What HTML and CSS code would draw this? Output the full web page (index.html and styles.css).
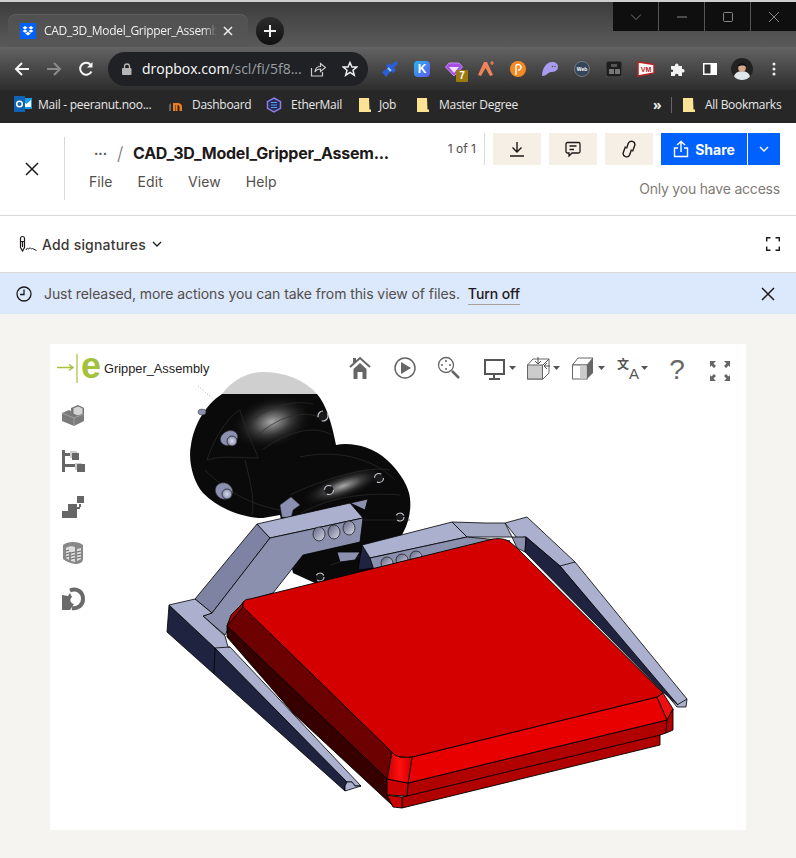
FILE: index.html
```html
<!DOCTYPE html>
<html lang="en">
<head>
<meta charset="utf-8">
<title>CAD_3D_Model_Gripper_Assembly</title>
<link rel="stylesheet" href="styles.css">
</head>
<body>
<div class="browser">
  <div class="tabstrip">
    <div class="tab">
      <svg class="favicon" viewBox="0 0 16 16" width="16" height="16"><rect width="16" height="16" fill="#0061fe"/><path d="M5 3 2.500 4.700 5 6.400 7.600 4.700ZM11 3 8.400 4.700 11 6.400 13.500 4.700ZM5 6.400 2.500 8.100 5 9.800 7.600 8.100ZM11 6.400 8.400 8.100 11 9.800 13.500 8.100ZM5.200 10.600 8 8.800 10.800 10.600 8 12.600Z" fill="#fff"/></svg>
      <span class="tab-title">CAD_3D_Model_Gripper_Assembly</span>
      <svg class="tab-x" viewBox="0 0 10 10" width="10" height="10"><path d="M1 1 9 9M9 1 1 9" stroke="#eee" stroke-width="1.500"/></svg>
    </div>
    <div class="newtab"><svg viewBox="0 0 12 12" width="12" height="12"><path d="M6 0V12M0 6H12" stroke="#eee" stroke-width="2"/></svg></div>
    <div class="wincontrols">
      <div class="winbtn"><svg viewBox="0 0 12 12" width="12" height="12"><path d="M1 3.500 6 8.500 11 3.500" fill="none" stroke="#777" stroke-width="1"/></svg></div>
      <div class="winbtn"><svg viewBox="0 0 12 12" width="12" height="12"><path d="M1 6H11" stroke="#888" stroke-width="1"/></svg></div>
      <div class="winbtn"><svg viewBox="0 0 12 12" width="12" height="12"><rect x="1.500" y="1.500" width="9" height="9" rx="1" fill="none" stroke="#888"/></svg></div>
      <div class="winbtn"><svg viewBox="0 0 12 12" width="12" height="12"><path d="M1 1 11 11M11 1 1 11" stroke="#888" stroke-width="1"/></svg></div>
    </div>
  </div>
  <div class="toolbar">
    <div class="navbtn"><svg viewBox="0 0 16 16" width="16" height="16"><path d="M15 8H2M8 2 2 8 8 14" fill="none" stroke="#f4f4f4" stroke-width="2"/></svg></div>
    <div class="navbtn"><svg viewBox="0 0 16 16" width="16" height="16"><path d="M1 8H14M8 2 14 8 8 14" fill="none" stroke="#8a8a8a" stroke-width="2"/></svg></div>
    <div class="navbtn"><svg viewBox="0 0 16 16" width="16" height="16"><path d="M13.500 10.500A6 6 0 1 1 12.700 3.800" fill="none" stroke="#f4f4f4" stroke-width="2"/><path d="M14.500 1V6.500H9Z" fill="#f4f4f4"/></svg></div>
    <div class="omnibox">
      <svg class="lock" viewBox="0 0 10 12" width="10" height="12"><path d="M2.500 5V3.500a2.500 2.500 0 0 1 5 0V5" fill="none" stroke="#b5b5b5" stroke-width="1.300"/><rect y="5" width="9.500" height="7" rx="1" fill="#b5b5b5"/></svg>
      <span class="url"><b>dropbox.com</b>/scl/fi/5f8...</span>
      <svg class="omni-share" viewBox="0 0 16 16" width="16" height="16"><path d="M1.500 7V15H12.500V11" fill="none" stroke="#ccc" stroke-width="1.200"/><path d="M5 11C5 7 8 5.500 10.500 5.500V2.500L15.500 6.500 10.500 10.500V8C8 8 6 9 5 11Z" fill="none" stroke="#ccc" stroke-width="1.200"/></svg>
      <svg class="omni-star" viewBox="0 0 16 16" width="16" height="16"><path d="M8 1.500 10 6H14.800L11 9.200 12.300 14.200 8 11.400 3.700 14.200 5 9.200 1.200 6H6Z" fill="none" stroke="#eee" stroke-width="1.500"/></svg>
    </div>
    <div class="extensions">
      <div class="ext"><svg viewBox="0 0 18 18" width="18" height="18"><path d="M1 12 7 8 5 6 8 3 10 5 15 1 17 3 13 8 15 10 12 13 10 11 5 17Z" fill="#2b5fd9"/><path d="M7 8 10 11" stroke="#9cf" stroke-width="2"/></svg></div>
      <div class="ext"><div class="kbadge">K</div></div>
      <div class="ext"><svg viewBox="0 0 18 16" width="18" height="16"><path d="M4 2H14L17.500 6 9 15 .5 6Z" fill="#a54fe0" stroke="#c98af0"/><path d="M4 6H14L9 12Z" fill="#f0e0ff"/></svg><span class="count">7</span></div>
      <div class="ext"><svg viewBox="0 0 18 18" width="18" height="18"><path d="M7 2 10 2 16 15 13 16 8.500 8 4 16 1 15Z" fill="#f0835a"/><path d="M15 1V5M13 3H17" stroke="#f0835a" stroke-width="1.200"/></svg></div>
      <div class="ext"><svg viewBox="0 0 18 18" width="18" height="18"><circle cx="9" cy="9" r="8" fill="#f6891f"/><path d="M7 15V5.500a2.800 2.800 0 1 1 2 4.500" fill="none" stroke="#fff" stroke-width="1.500"/></svg></div>
      <div class="ext"><svg viewBox="0 0 18 16" width="18" height="16"><path d="M1 15C1 8 5 1 11 1 15 1 17 3 17 6 17 10 13 11 10 11 7 11 6 15 1 15Z" fill="#a99bef"/><circle cx="11.500" cy="5.500" r=".8" fill="#554"/><circle cx="14" cy="5.500" r=".8" fill="#554"/></svg></div>
      <div class="ext"><div class="webbadge">Web</div></div>
      <div class="ext"><svg viewBox="0 0 16 16" width="16" height="16"><rect width="16" height="16" rx="2" fill="#1d1d1d" stroke="#555"/><rect x="5" y="3" width="6" height="3" fill="#555"/><rect x="3" y="8" width="5" height="5" fill="#777"/><rect x="9" y="8" width="5" height="5" fill="#777"/></svg></div>
      <div class="ext"><svg viewBox="0 0 18 16" width="18" height="16"><path d="M1 1 17 3.500V12L1 15Z" fill="#fff" stroke="#b22" stroke-width="1.500"/><text x="9" y="10.500" class="vm">VM</text></svg></div>
      <div class="ext"><svg viewBox="0 0 16 16" width="16" height="16"><path d="M1 5H5C4.500 1.500 9 1.500 8.500 5H12V8C15.500 7.500 15.500 12 12 11.500V15H8.500C9 12 4.500 12 5 15H1V11C4 11.500 4 8 1 8.500Z" fill="#f2f2f2"/></svg></div>
      <div class="ext"><svg viewBox="0 0 14 12" width="14" height="12"><rect width="14" height="12" fill="#fff"/><rect x="1.500" y="1.500" width="6" height="9" fill="#333"/></svg></div>
      <div class="ext"><div class="avatar"><svg viewBox="0 0 22 22" width="22" height="22"><rect width="22" height="22" fill="#222"/><ellipse cx="11" cy="19" rx="8" ry="6" fill="#dfe7ea"/><circle cx="11" cy="10" r="3.800" fill="#d8a88c"/><path d="M6 9C7 4 15 4 16 9 14 7 9 7 6 9Z" fill="#111"/></svg></div></div>
      <div class="ext"><svg viewBox="0 0 4 14" width="4" height="14"><circle cx="2" cy="2" r="1.500" fill="#eee"/><circle cx="2" cy="7" r="1.500" fill="#eee"/><circle cx="2" cy="12" r="1.500" fill="#eee"/></svg></div>
    </div>
  </div>
  <div class="bookmarks">
    <a class="bm bm-mail"><svg viewBox="0 0 18 16" width="18" height="16"><rect x="7" y="2" width="11" height="11" fill="#1f9ae0"/><path d="M8 4 12.500 8 17 4V11H8Z" fill="#fff"/><rect y="0" width="11" height="16" fill="#0f63b5"/><circle cx="5.500" cy="8" r="2.800" fill="none" stroke="#fff" stroke-width="1.500"/></svg><span>Mail - peeranut.noo...</span></a>
    <a class="bm bm-dash"><svg viewBox="0 0 16 12" width="16" height="12"><path d="M1 12V6L3 4V12Z" fill="#666"/><path d="M5 12V4H9C12 4 14 5 14 8V12H11.500V8C11.500 6.500 10 6 9.500 6V12H7.500V6H7V12Z" fill="#f07c1e"/></svg><span>Dashboard</span></a>
    <a class="bm bm-ether"><svg viewBox="0 0 16 16" width="16" height="16"><path d="M8 1 14.500 4.700V11.300L8 15 1.500 11.300V4.700Z" fill="#2a2a55" stroke="#8d7de8" stroke-width="1.500"/><path d="M5 5.500H11M5 8H11M5 10.500H11" stroke="#4aa3ff" stroke-width="1.200"/></svg><span>EtherMail</span></a>
    <a class="bm bm-job"><svg class="folder" viewBox="0 0 12 14" width="12" height="14"><path d="M0 0H10L10.500 11.500H12V14H0Z" fill="#fde293"/></svg><span>Job</span></a>
    <a class="bm bm-master"><svg class="folder" viewBox="0 0 12 14" width="12" height="14"><path d="M0 0H10L10.500 11.500H12V14H0Z" fill="#fde293"/></svg><span>Master Degree</span></a>
    <span class="chev">»</span>
    <span class="bm-rule"></span>
    <a class="bm bm-all"><svg class="folder" viewBox="0 0 12 14" width="12" height="14"><path d="M0 0H10L10.500 11.500H12V14H0Z" fill="#fde293"/></svg><span>All Bookmarks</span></a>
  </div>
</div>

<div class="page">
  <header class="header">
    <div class="close-col"><svg viewBox="0 0 14 14" width="14" height="14"><path d="M1 1 13 13M13 1 1 13" stroke="#1e1919" stroke-width="1.500"/></svg></div>
    <div class="title-col">
      <div class="crumb"><span class="dots">···</span><span class="slash">/</span><h1 class="filename">CAD_3D_Model_Gripper_Assem...</h1></div>
      <nav class="menu"><span>File</span><span>Edit</span><span>View</span><span>Help</span></nav>
    </div>
    <div class="action-col">
      <div class="actions">
        <span class="pages">1 of 1</span>
        <button class="beige"><svg viewBox="0 0 16 16" width="16" height="16"><path d="M8 1V11M3.500 6.500 8 11 12.500 6.500M1 15H15" fill="none" stroke="#1e1919" stroke-width="1.400"/></svg></button>
        <button class="beige"><svg viewBox="0 0 16 16" width="16" height="16"><path d="M2.500 1.500H13.500A1.500 1.500 0 0 1 15 3V10.500A1.500 1.500 0 0 1 13.500 12H7L4 15V12H2.500A1.500 1.500 0 0 1 1 10.500V3A1.500 1.500 0 0 1 2.500 1.500ZM4.500 5H11.500M4.500 8.500H9" fill="none" stroke="#1e1919" stroke-width="1.300"/></svg></button>
        <button class="beige"><svg viewBox="0 0 16 18" width="16" height="18"><path d="M5.500 8.500 7.200 3.500A3.400 3.400 0 0 1 13.600 5.800L11.500 11.500M10.500 9.500 8.800 14.500A3.400 3.400 0 0 1 2.400 12.200L4.500 6.500" fill="none" stroke="#1e1919" stroke-width="1.400"/></svg></button>
        <button class="share"><svg viewBox="0 0 16 18" width="16" height="18"><path d="M8 12V1.500M4 5 8 1.500 12 5M5 8H1.500V16.500H14.500V8H11" fill="none" stroke="#fff" stroke-width="1.400"/></svg>Share</button>
        <button class="share-more"><svg viewBox="0 0 12 8" width="12" height="8"><path d="M2 2 6 6 10 2" fill="none" stroke="#fff" stroke-width="1.400"/></svg></button>
      </div>
      <div class="access">Only you have access</div>
    </div>
  </header>
  <div class="signbar">
    <div class="sign"><svg viewBox="0 0 18 18" width="18" height="18"><path d="M1.500 3.500A2 2 0 0 1 5.500 3.500V12.500L3.500 16 1.500 12.500ZM1.500 6.500H5.500M3.500 6.500V12" fill="none" stroke="#1e1919" stroke-width="1.200"/><path d="M7 15C8.500 11 9 15 10 14 11 11 12 15 13.500 13.500L17.500 15.500" fill="none" stroke="#1e1919" stroke-width="1"/></svg><span>Add signatures</span><svg viewBox="0 0 10 6" width="10" height="6"><path d="M1 1 5 5 9 1" fill="none" stroke="#1e1919" stroke-width="1.300"/></svg></div>
    <svg class="fullscreen" viewBox="0 0 14 14" width="14" height="14"><path d="M.7 4.500V.7H4.500M9.500 .7H13.300V4.500M13.300 9.500V13.300H9.500M4.500 13.300H.7V9.500" fill="none" stroke="#1e1919" stroke-width="1.400"/></svg>
  </div>
  <div class="banner">
    <svg class="clock" viewBox="0 0 16 16" width="16" height="16"><circle cx="8" cy="8" r="7" fill="none" stroke="#1e1919" stroke-width="1.300"/><path d="M8 3.500V8.500H4" fill="none" stroke="#1e1919" stroke-width="1.300"/></svg>
    <span class="banner-text">Just released, more actions you can take from this view of files.</span>
    <a class="turnoff">Turn off</a>
    <svg class="banner-x" viewBox="0 0 14 14" width="14" height="14"><path d="M1 1 13 13M13 1 1 13" stroke="#1e1919" stroke-width="1.500"/></svg>
  </div>
  <main class="stage">
    <section class="viewer">
      <svg class="model" viewBox="50 344 696 486" width="696" height="486">
        <defs>
          <radialGradient id="glow1" cx=".5" cy=".5" r=".5"><stop offset="0" stop-color="#a8a8a8"/><stop offset=".45" stop-color="#3c3c3c"/><stop offset="1" stop-color="#0a0a0a" stop-opacity="0"/></radialGradient>
          <radialGradient id="bolt" cx=".5" cy=".5" r=".6"><stop offset="0" stop-color="#d6d9ea"/><stop offset="1" stop-color="#7d81a5"/></radialGradient>
          <linearGradient id="corner" x1="0" x2="1" y1="0" y2="0"><stop offset="0" stop-color="#c80000"/><stop offset=".5" stop-color="#ff0f0f"/><stop offset="1" stop-color="#d40000"/></linearGradient>
          <linearGradient id="hole" x1="0" x2="1" y1="0" y2="1"><stop offset="0" stop-color="#5e617e"/><stop offset="1" stop-color="#d7daea"/></linearGradient>
        </defs>
        <path class="cap" d="M222 394C232 380 248 372 262 372 285 372 305 380 317 394Z"/>
        <path class="ball" d="M222 394H317C326 404 332 424 336 445 350 442 372 446 387 460 398 470 406 482 409 493 412 505 410 520 403 533L380 570 317 584 293 573 280 515 263 518C245 518 220 510 203 493 192 480 188 458 191 445 194 425 205 405 222 394Z"/>
        <ellipse class="glow" cx="272" cy="422" rx="42" ry="26" transform="rotate(-15 272 422)" fill="url(#glow1)"/>
        <ellipse class="glow" cx="343" cy="486" rx="44" ry="13" transform="rotate(-20 343 486)" fill="url(#glow1)"/>
        <g class="seams">
          <path d="M207 460C215 435 230 415 240 410 245 430 256 450 258 458 240 458 222 455 207 460Z"/>
          <path d="M253 420C270 405 295 400 313 404M258 435C280 415 305 410 322 418M262 450C290 430 315 425 332 435"/>
          <path d="M300 457C330 450 370 455 395 480M290 495C320 480 370 465 390 470M285 525C300 510 340 490 400 495M205 470C225 490 250 505 280 510M245 460C250 480 255 500 252 515"/>
          <path d="M345 520H410M330 565 375 552"/>
        </g>
        <g class="bolts">
          <ellipse cx="229" cy="438" rx="9" ry="7" transform="rotate(-25 229 438)"/><circle class="socket" cx="232" cy="441" r="5"/>
          <ellipse cx="224" cy="491" rx="9" ry="8" transform="rotate(30 224 491)"/><circle class="socket" cx="227" cy="494" r="5"/>
          <path d="M280 505 291 497 300 505 293 510 291 518 282 517Z"/>
          <ellipse cx="202" cy="412" rx="4" ry="3"/>
        </g>
        <g class="caps"><circle cx="323" cy="416" r="5"/><circle cx="329" cy="490" r="4.500"/><circle cx="379" cy="478" r="4.500"/><circle cx="400" cy="517" r="4"/><circle cx="320" cy="577" r="4"/></g>
        <path class="speck" d="M198 386 213 399"/>
        <path class="f-mid" d="M350 503 368 499 365 510ZM337 552H360L355 560 340 562Z"/>
        <path class="f-light" d="M505 523 527 517 575 562 687 699 686 707 677 707 560 566 526 537 517 538Z"/>
        <path class="f-line" d="M560 566 575 562M677 705 687 699"/>
        <path class="f-mid" d="M512 537 526 537 525 552 517 548Z"/>
        <path class="f-dark" d="M526 537 560 566 678 705 663 692 525 552Z"/>
        <path class="f-light2" d="M452 522 485 523 505 523 512 537 467 537Z"/>
        <path class="f-dark" d="M362 545 373 560 374 568 358 570Z"/>
        <path class="f-light" d="M362 545 452 522 467 537 370 558Z"/>
        <path class="f-mid" d="M370 558 467 537 510 541 400 566 374 570Z"/>
        <g class="holes"><circle cx="387" cy="563" r="6"/><circle cx="402" cy="560" r="6"/><circle cx="416" cy="557" r="6"/></g>
        <path class="f-dark" d="M169 605 167 632 345 791 345 786 347 782 215 648Z"/>
        <path class="f-mid2" d="M195 599 257 524 270 538 212 613Z"/>
        <path class="f-light" d="M257 524 350 503 363 518 270 538Z"/>
        <path class="f-mid" d="M270 538 363 518 360 542 303 555 273 593 243 602 225 635 203 616 212 613Z"/>
        <g class="holes"><ellipse cx="319" cy="534" rx="6" ry="7"/><ellipse cx="334" cy="532" rx="6" ry="7"/><ellipse cx="349" cy="528" rx="6" ry="7"/></g>
        <path class="f-light" d="M169 605 195 599 212 613 203 616 225 636 228 647 230 647 361 786 355 786 352 782 347 782 215 648Z"/>
        <path class="f-light" d="M345 786 347 782 352 782 355 786 361 786 345 791Z"/>
        <path class="f-line" d="M215 648 230 647M215 648 214 673"/>
        <path class="r-shade" d="M243 607 392 752 387 779 227 626 232 615Z"/>
        <path class="r-deep" d="M227 626 387 779 387 795 392 805 293 713 227 637Z"/>
        <path class="r-shade2" d="M243 603 231 615 227 626 243 607Z"/>
        <path class="r-band2" d="M408 783 667 720 666 733 660 735 660 745 402 808 402 797 407 796Z"/>
        <path class="r-line" d="M407 796 660 735"/>
        <path class="r-corner2" d="M387 779 408 783 407 796 387 795Z"/>
        <path class="r-corner2" d="M392 796 402 797 402 808 393 807 387 795Z"/>
        <path class="r-band" d="M412 757 657 697 667 720 408 783Z"/>
        <path class="r-corner" d="M657 697 663 693 673 709 667 720Z"/>
        <path class="r-corner3" d="M667 720 673 709 673 730 666 733Z"/>
        <path class="r-grad" d="M392 752 400 757 412 757 408 783 387 779Z" fill="url(#corner)"/>
        <path class="r-top" d="M243 603C244 600 247 599 250 599L493 539C500 538 506 539 510 542L517 548 663 693 657 697 412 757H402C398 757 394 755 392 752L243 607Z"/>
      </svg>
      <div class="viewer-top">
        <div class="brand"><svg viewBox="0 0 24 30" width="24" height="30"><path d="M1 13.500H17M13 10.500 17 13.500 13 16.500" fill="none" stroke="#a4c13c" stroke-width="1.500"/><path d="M21 0V29" stroke="#a4c13c" stroke-width="1.200"/></svg><span class="brand-e">e</span><span class="brand-name">Gripper_Assembly</span></div>
        <div class="tools">
          <svg viewBox="338 345 44 46" width="44" height="46"><path d="M350 367 360 358 370 367" fill="none" stroke="#666" stroke-width="2"/><path d="M353 358H356V362L353 365Z" fill="#666"/><path d="M353.500 369 360 363 366.500 369V379H362.500V372H357.500V379H353.500Z" fill="#666"/></svg>
          <svg viewBox="382 345 46 46" width="46" height="46"><circle cx="405" cy="368" r="10" fill="none" stroke="#666" stroke-width="1.500"/><path d="M401 362 411 368 401 374Z" fill="#666"/></svg>
          <svg viewBox="428 345 42 46" width="42" height="46"><circle cx="446" cy="365" r="7.500" fill="none" stroke="#666" stroke-width="1.300"/><path d="M452 371 459 378" stroke="#666" stroke-width="2.500"/><path d="M446 360V362M446 368V370M441 365H443M449 365H451" stroke="#666" stroke-width="1.500"/></svg>
          <svg viewBox="470 345 56 46" width="56" height="46"><rect x="485" y="360" width="19" height="14" fill="none" stroke="#555" stroke-width="2"/><path d="M494 375V378M489 379H500" stroke="#555" stroke-width="2"/><path d="M509 366H516L512.500 370Z" fill="#555"/></svg>
          <svg viewBox="526 345 44 46" width="44" height="46"><path d="M527.500 365 533 359H549V373L543 379H527.500Z" fill="#fff" stroke="#666"/><rect x="527.500" y="365" width="15" height="14" fill="#ccc" stroke="#666"/><path d="M543 365 549 359M538 357V364M535 361 538 364 541 361M550 366H544M547 363 544 366 547 369" fill="none" stroke="#555"/><path d="M553 366H560L556.500 370Z" fill="#555"/></svg>
          <svg viewBox="570 345 45 46" width="45" height="46"><path d="M572.500 365 578 358H593L587 365Z" fill="#fff" stroke="#666"/><path d="M587 365 593 358V373L587 379Z" fill="#666"/><rect x="572.500" y="365" width="14.500" height="14" fill="#fff" stroke="#666"/><rect x="580" y="365.500" width="6.500" height="13" fill="#ccc"/><path d="M598 366H605L601.500 370Z" fill="#555"/></svg>
          <svg viewBox="615 345 45 46" width="45" height="46"><text x="617" y="369" class="lang-zh">文</text><text x="629" y="379" class="lang-a">A</text><path d="M641 366H648L644.500 370Z" fill="#555"/></svg>
          <svg viewBox="660 345 38 46" width="38" height="46"><text x="677" y="379" class="help">?</text></svg>
          <svg viewBox="698 345 44 46" width="44" height="46"><path d="M710 361H716L713.500 363.500 716 366 714 368 711.500 365.500 710 367ZM730 361H724L726.500 363.500 724 366 726 368 728.500 365.500 730 367ZM710 381H716L713.500 378.500 716 376 714 374 711.500 376.500 710 375ZM730 381H724L726.500 378.500 724 376 726 374 728.500 376.500 730 375Z" fill="#666"/></svg>
        </div>
      </div>
      <div class="side-tools">
        <svg viewBox="0 0 24 24" width="24" height="24"><path d="M1 10 8 7 10 8V5L17 2 23 5V18L13 23 1 18Z" fill="#7b7b7b"/><path d="M12 5 17 3 22 5V11L17 13 12 11Z" fill="#d5d5d5" stroke="#666" stroke-width=".8"/><path d="M1 10 13 15V23M13 15 23 11" fill="none" stroke="#aaa" stroke-width=".8"/></svg>
        <svg viewBox="0 0 24 24" width="24" height="24"><path d="M1 1H4V4H10V7H4V15H14V18H4V23H1Z" fill="#666"/><rect x="9" y="2" width="7" height="7" fill="#ccc"/><rect x="11" y="4" width="7" height="7" fill="#666"/><rect x="14" y="14" width="7" height="7" fill="#ccc"/><rect x="16" y="15" width="8" height="8" fill="#666"/></svg>
        <svg viewBox="0 0 24 24" width="24" height="24"><path d="M1 23V16H7V9H16V23Z" fill="#666"/><rect x="16" y="1" width="7" height="7" fill="#666"/><path d="M19 9V13H15V17H11" fill="none" stroke="#666" stroke-width="2" stroke-dasharray="3 1"/></svg>
        <svg viewBox="0 0 24 24" width="24" height="24"><path d="M2 4C6 0 18 0 22 4V18C22 21 19 23 14 23 9 22 6 21 2 18Z" fill="#888"/><path d="M5 7C8 5 12 5 14 6V21L10 20V11H8V19L5 17ZM16 8 20 7V18L16 20Z" fill="#ddd"/><path d="M5 10 8 9M5 13 8 12M5 16 8 15M10 12 14 11M10 15 14 14M10 18 14 17M16 11 20 10M16 14 20 13M16 17 20 16" stroke="#666"/></svg>
        <svg viewBox="0 0 24 24" width="24" height="24"><path d="M1 8 7 9 9 6 11 10C10 11 9 12 9.500 14 10 16 12 17 13 17L9 23H1Z" fill="#6a6a6a"/><path d="M9 3.500C16 .5 22 5 22 12 22 18 17 22 11 21" fill="none" stroke="#6a6a6a" stroke-width="4"/></svg>
      </div>
    </section>
  </main>
</div>
</body>
</html>
```
FILE: styles.css
```css
* { box-sizing: border-box; }
html, body { margin: 0; padding: 0; }
body { width: 796px; height: 858px; overflow: hidden; background: #f5f4f0; font-family: Inter, Roboto, "Liberation Sans", sans-serif; }
svg { display: block; flex: none; }
a { color: inherit; text-decoration: none; }

.browser { color: #e8e8e8; font-family: "Open Sans", "Noto Sans", sans-serif; }
.tabstrip { position: relative; height: 47px; display: flex; align-items: flex-end; padding: 14px 0 0 8px; border-top: 2px solid #cfcfcf; background: linear-gradient(#3d3d3d, #5a5a5a); }
.tab { width: 240px; height: 33px; display: flex; align-items: center; padding: 0 15px 0 12px; border-radius: 8px 8px 0 0; background: linear-gradient(#505050, #575757); box-shadow: inset 0 1px 0 #5e5e5e; }
.tab-title { flex: 1; margin-left: 8px; font-size: 12px; letter-spacing: -.3px; white-space: nowrap; overflow: hidden; color: #f0f0f0; -webkit-mask-image: linear-gradient(90deg, #000 92%, transparent); mask-image: linear-gradient(90deg, #000 92%, transparent); }
.tab-x { margin-left: 6px; }
.newtab { width: 28px; height: 28px; margin: 0 0 2px 8px; border-radius: 50%; background: linear-gradient(#2c2c2c, #101010); display: flex; align-items: center; justify-content: center; }
.wincontrols { position: absolute; top: 0; right: 0; height: 29px; display: flex; }
.winbtn { width: 46px; height: 29px; background: #0f0f0f; border-left: 1px solid #555; display: flex; align-items: center; justify-content: center; }
.winbtn:first-child { border-left: 0; width: 45px; }

.toolbar { height: 43px; display: flex; align-items: center; padding-left: 6px; background: linear-gradient(#636363, #2d2d2d); }
.navbtn { width: 32px; height: 32px; display: flex; align-items: center; justify-content: center; }
.omnibox { width: 260px; height: 34px; margin-left: 6px; padding-left: 14px; display: flex; align-items: center; border-radius: 17px; background: #202124; }
.lock { margin-right: 10px; }
.url { flex: 1; font-size: 14px; color: #9aa0a6; white-space: nowrap; }
.url b { font-weight: 400; color: #fff; }
.omni-share { margin-right: 16px; }
.omni-star { margin-right: 10px; }
.extensions { display: flex; margin-left: 6px; }
.ext { position: relative; width: 32px; height: 32px; display: flex; align-items: center; justify-content: center; }
.kbadge { width: 16px; height: 16px; border-radius: 4px; background: linear-gradient(135deg, #2ab4f0, #5b5bf0); color: #fff; font: 700 12px/16px "Liberation Sans", sans-serif; text-align: center; }
.count { position: absolute; left: 18px; top: 17px; width: 12px; height: 12px; background: #9b7a10; color: #fff; font: 700 10px/12px "Liberation Sans", sans-serif; text-align: center; border-radius: 1px; }
.webbadge { width: 16px; height: 16px; border-radius: 50%; background: #34465c; border: 1px solid #777; color: #fff; font: 700 5px/14px "Liberation Sans", sans-serif; text-align: center; }
.vm { font: 700 7px "Liberation Sans", sans-serif; fill: #c02020; text-anchor: middle; }
.avatar { width: 22px; height: 22px; border-radius: 50%; overflow: hidden; }

.bookmarks { position: relative; height: 33px; display: flex; align-items: center; font-size: 12px; letter-spacing: -.28px; background: #272727; padding-bottom: 4px; }
.bm { display: flex; align-items: center; white-space: nowrap; }
.bm-mail { margin-left: 14px; gap: 6px; width: 138px; }
.bm-mail svg { margin-top: -1px; }
.bm-dash { margin-left: 16px; gap: 8px; width: 82px; }
.bm-ether { margin-left: 16px; gap: 9px; width: 73px; }
.bm-job { margin-left: 20px; gap: 8px; width: 40px; }
.bm-master { margin-left: 18px; gap: 10px; width: 100px; }
.chev { margin-left: 136px; font-size: 14px; line-height: 1; color: #eee; font-weight: 700; width: 10px; }
.bm-rule { width: 1px; height: 16px; margin-left: 8px; background: #666; }
.bm-all { margin-left: 11px; gap: 10px; }

.page { color: #1e1919; }
.header { height: 93px; display: flex; background: #fff; border-bottom: 1px solid #dbd9d6; }
.close-col { width: 65px; height: 63px; margin-top: 14px; display: flex; align-items: center; justify-content: center; padding-right: 1px; border-right: 1px solid #dbd9d6; }
.title-col { width: 360px; padding: 15px 0 0 24px; }
.crumb { height: 30px; display: flex; align-items: center; }
.dots { width: 23px; margin-left: 5px; font-size: 13px; font-weight: 700; color: #555; }
.slash { width: 16px; font-size: 18px; font-weight: 300; color: #777; }
.filename { margin: 0; font-size: 16px; font-weight: 700; letter-spacing: -.25px; white-space: nowrap; }
.menu { display: flex; gap: 25px; margin-top: 5px; font-size: 14px; letter-spacing: .1px; color: #524e4a; }
.action-col { flex: 1; padding: 10px 16px 0 0; display: flex; flex-direction: column; align-items: flex-end; }
.actions { display: flex; align-items: stretch; height: 32px; }
.pages { padding: 8px 8px 0 0; height: 32px; border-right: 1px solid #dbd9d6; font-size: 12px; color: #524e4a; }
button { border: 0; padding: 0; display: flex; align-items: center; justify-content: center; font: inherit; }
.beige { width: 48px; margin-left: 8px; background: #f5efe6; }
.share { width: 86px; margin-left: 8px; gap: 6px; background: #0061fe; color: #fff; font-size: 14px; font-weight: 700; }
.share-more { width: 32px; margin-left: 1px; background: #0061fe; }
.access { margin-top: 15px; font-size: 14px; letter-spacing: -.2px; color: #7f7b76; }

.signbar { height: 57px; display: flex; align-items: center; justify-content: space-between; padding: 0 16px 0 19px; background: #fff; border-bottom: 1px solid #dbd9d6; }
.sign { display: flex; align-items: center; font-size: 14px; font-weight: 500; letter-spacing: .2px; color: #3c3835; }
.sign span { margin: 0 6px 0 5px; }

.banner { height: 41px; display: flex; align-items: center; padding: 0 21px 0 16px; background: #dce8fc; font-size: 14px; letter-spacing: -.08px; color: #524e4a; }
.banner-text { margin-left: 12px; }
.turnoff { margin-left: 8px; padding: 2px 0; border-bottom: 1px solid #a8a29a; color: #1e1919; font-weight: 500; }
.banner-x { margin-left: auto; }

.stage { padding: 30px 50px 0; }
.viewer { position: relative; width: 696px; height: 486px; background: #fff; }
.model { position: absolute; inset: 0; }
.viewer-top { position: relative; display: flex; justify-content: space-between; height: 47px; padding-top: 1px; padding-right: 4px; }
.brand { display: flex; align-items: center; padding-left: 6px; height: 47px; }
.brand-e { margin: -5px 0 0 1px; font: 700 36px/1 "Liberation Sans", sans-serif; color: #a4c13c; }
.brand-name { margin-left: 3px; font: 12.800px "Liberation Sans", sans-serif; color: #222; }
.tools { display: flex; }
.lang-zh { font: 700 12px "Noto Sans CJK SC", sans-serif; fill: #555; }
.lang-a { font: 15px "Liberation Sans", sans-serif; fill: #555; }
.help { font: 400 28px "Liberation Sans", sans-serif; fill: #666; text-anchor: middle; }
.side-tools { position: relative; width: 22px; margin-left: 11px; padding-top: 12px; display: flex; flex-direction: column; gap: 22px; }

.cap { fill: #cfcfcf; }
.ball { fill: #0a0a0a; }
.seams { fill: none; stroke: #2c2c2c; stroke-width: .7; }
.bolts ellipse, .bolts path { fill: #8b8fb0; stroke: #333; stroke-width: .5; }
.bolts .socket { fill: url(#bolt); stroke: #222; stroke-width: .8; }
.caps circle { fill: #1a1a1a; stroke: #c8c8d8; stroke-width: 1.200; stroke-dasharray: 9 5; }
.speck { stroke: #aaa; stroke-width: 1; stroke-dasharray: 1 2; }
.f-light, .f-light2, .f-mid, .f-mid2, .f-dark { stroke: #000; stroke-width: .8; stroke-linejoin: round; }
.f-light { fill: #aab0cd; }
.f-light2 { fill: #a3a9c3; }
.f-mid { fill: #8b90ae; }
.f-mid2 { fill: #7f83a3; }
.f-dark { fill: #20233f; }
.f-line { fill: none; stroke: #000; stroke-width: .8; }
.holes circle, .holes ellipse { fill: url(#hole); stroke: #222; stroke-width: .8; }
.r-top, .r-band, .r-band2, .r-corner, .r-corner2, .r-corner3, .r-grad, .r-shade, .r-deep, .r-shade2 { stroke: #000; stroke-width: .9; stroke-linejoin: round; }
.r-top { fill: #d40000; }
.r-band { fill: #e80000; }
.r-band2 { fill: #b00000; }
.r-corner { fill: #ee1010; }
.r-corner2 { fill: #cc0000; }
.r-corner3 { fill: #b50000; }
.r-shade { fill: #6d0000; }
.r-shade2 { fill: #9a0505; }
.r-deep { fill: #360000; }
.r-line { fill: none; stroke: #000; stroke-width: .9; }
```
